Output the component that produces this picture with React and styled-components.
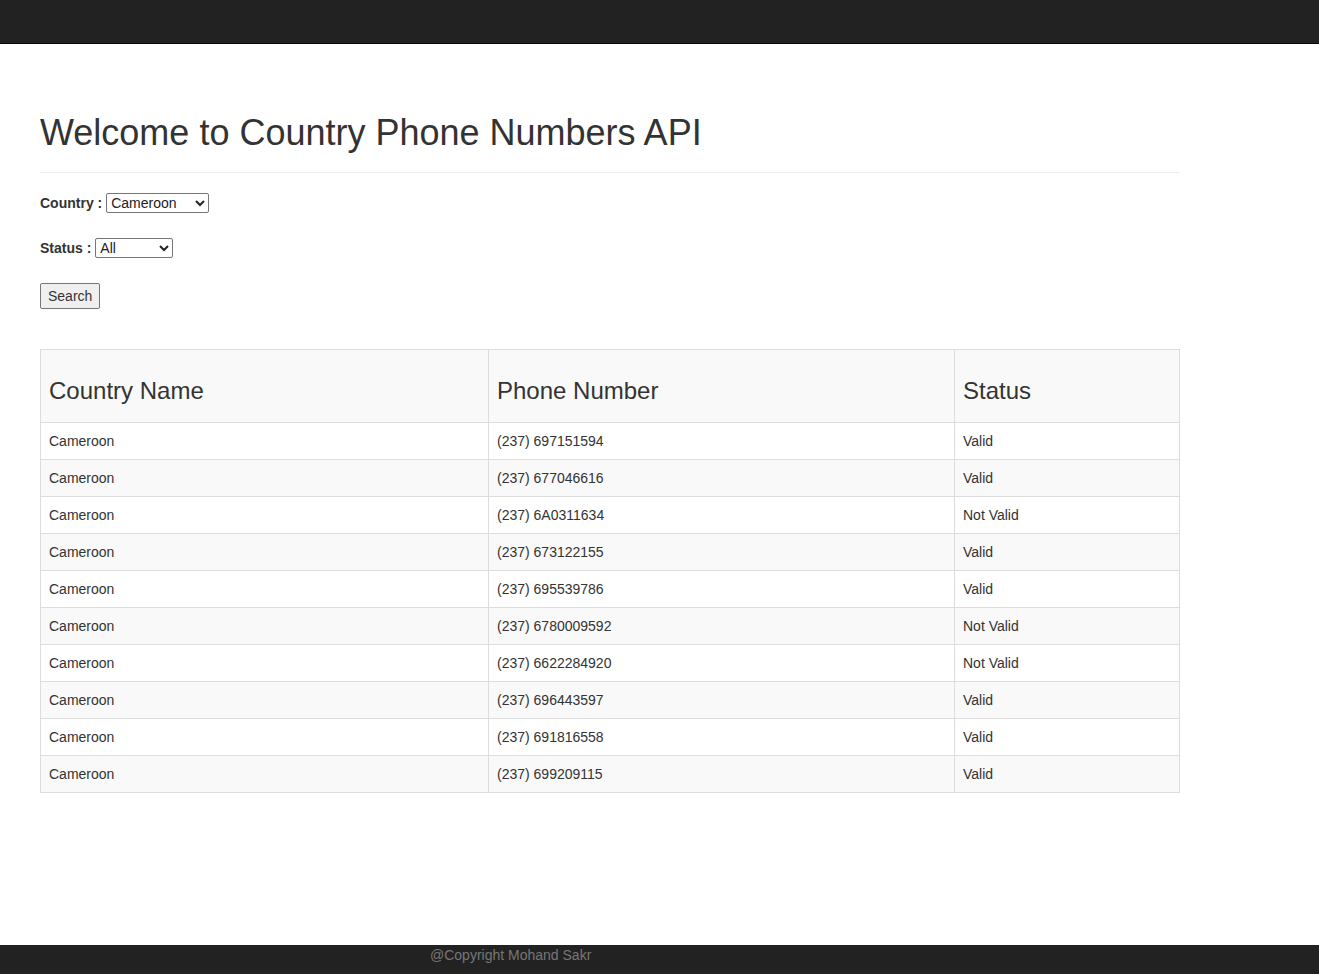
import React from 'react';
import styled, { createGlobalStyle } from 'styled-components';

const GlobalStyle = createGlobalStyle`
  html, body {
    margin: 0;
    padding: 0;
    background: #fff;
  }
  body {
    font-family: "Liberation Sans", Arial, Helvetica, sans-serif;
    font-size: 14px;
    line-height: 20px;
    color: #333;
  }
  * {
    box-sizing: border-box;
  }
`;

const Navbar = styled.nav`
  height: 44px;
  background-color: #222;
  border-bottom: 1px solid #080808;
`;

const Container = styled.main`
  width: 1140px;
  margin-left: 40px;
  padding-top: 29px;
  padding-bottom: 60px;
`;

const PageHeader = styled.div`
  margin: 40px 0 20px;
  padding-bottom: 9px;
  border-bottom: 1px solid #eee;
`;

const Title = styled.h1`
  margin: 20px 0 10px;
  font-size: 36px;
  font-weight: 500;
  line-height: 1.1;
  color: #333;
`;

const SearchForm = styled.form`
  display: flex;
  flex-direction: column;
  align-items: flex-start;
  gap: 25px;
`;

const Field = styled.div`
  display: flex;
  align-items: center;
  height: 20px;
`;

const Label = styled.label`
  font-weight: bold;
  margin-right: 4px;
`;

const Select = styled.select`
  width: ${p => p.$width}px;
  height: 20px;
  font-family: inherit;
  font-size: 14px;
  color: #222;
  background: #fff;
  border: 1px solid #767676;
  border-radius: 2px;
  padding: 0;
`;

const Button = styled.button`
  font-family: inherit;
  font-size: 14px;
  line-height: 20px;
  color: #333;
  padding: 2px 7px;
  background: #efefef;
  border: 1px solid #767676;
  border-radius: 2px;
`;

const Table = styled.table`
  width: 1140px;
  margin-top: 40px;
  border-collapse: collapse;
  border-spacing: 0;
  border: 1px solid #ddd;
`;

const Row = styled.tr`
  background-color: ${p => (p.$striped ? '#f9f9f9' : '#fff')};
`;

const Cell = styled.td`
  padding: 8px;
  line-height: 20px;
  border: 1px solid #ddd;
  vertical-align: top;
  text-align: left;
  font-weight: normal;
  width: ${p => (p.$width ? `${p.$width}px` : 'auto')};
`;

const HeadText = styled.h3`
  margin: 20px 0 10px;
  font-size: 24px;
  font-weight: 500;
  line-height: 1.1;
`;

const Footer = styled.footer`
  position: fixed;
  left: 0;
  right: 0;
  bottom: 0;
  height: 29px;
  background-color: #222;
  color: #777;
  padding-left: 430px;
  line-height: 20px;
`;

const rows = [
  ['697151594', 'Valid'],
  ['677046616', 'Valid'],
  ['6A0311634', 'Not Valid'],
  ['673122155', 'Valid'],
  ['695539786', 'Valid'],
  ['6780009592', 'Not Valid'],
  ['6622284920', 'Not Valid'],
  ['696443597', 'Valid'],
  ['691816558', 'Valid'],
  ['699209115', 'Valid'],
];

export default function App() {
  return (
    <>
      <GlobalStyle />
      <Navbar />
      <Container>
        <PageHeader>
          <Title>Welcome to Country Phone Numbers API</Title>
        </PageHeader>
        <SearchForm onSubmit={e => e.preventDefault()}>
          <Field>
            <Label>Country :</Label>
            <Select $width={103} defaultValue="Cameroon">
              <option>Cameroon</option>
              <option>Ethiopia</option>
              <option>Morocco</option>
              <option>Mozambique</option>
              <option>Uganda</option>
            </Select>
          </Field>
          <Field>
            <Label>Status :</Label>
            <Select $width={78} defaultValue="All">
              <option>All</option>
              <option>Valid</option>
              <option>Not Valid</option>
            </Select>
          </Field>
          <Button type="submit">Search</Button>
        </SearchForm>
        <Table>
          <tbody>
            <Row $striped>
              <Cell as="th" $width={448}><HeadText>Country Name</HeadText></Cell>
              <Cell as="th" $width={466}><HeadText>Phone Number</HeadText></Cell>
              <Cell as="th"><HeadText>Status</HeadText></Cell>
            </Row>
            {rows.map(([phone, status], i) => (
              <Row key={phone} $striped={i % 2 === 1}>
                <Cell>Cameroon</Cell>
                <Cell>(237) {phone}</Cell>
                <Cell>{status}</Cell>
              </Row>
            ))}
          </tbody>
        </Table>
      </Container>
      <Footer>@Copyright Mohand Sakr</Footer>
    </>
  );
}
